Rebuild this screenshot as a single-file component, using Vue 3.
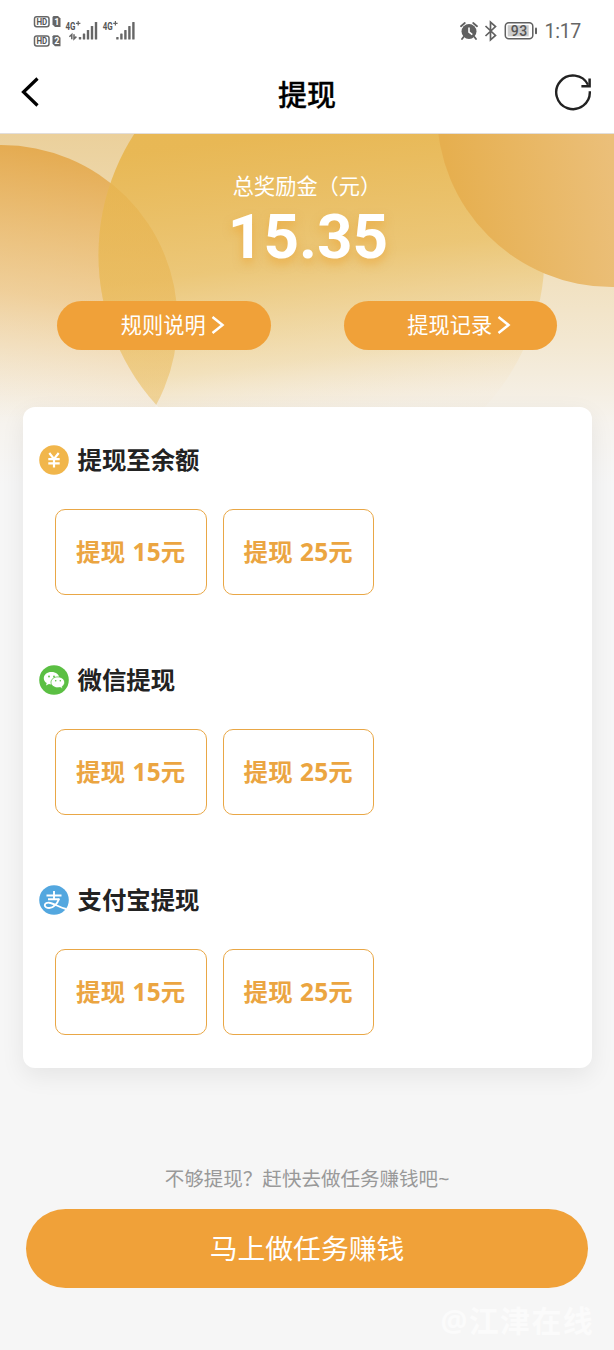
<script setup>
const groups = [
  { id: 'balance', title: '提现至余额' },
  { id: 'wechat', title: '微信提现' },
  { id: 'alipay', title: '支付宝提现' },
]
const amounts = [15, 25]
const links = ['规则说明', '提现记录']
const bars = [2.5, 6, 9.5, 13.5, 17.5]
</script>

<template>
  <div class="page">
    <header class="status">
      <svg class="signal" width="106" height="36" viewBox="0 0 106 36">
        <g fill="none" stroke="#666" stroke-width="1.5">
          <rect x="2.500" y="2.700" width="14.500" height="10" rx="2.200" />
          <rect x="2.500" y="21.900" width="14.500" height="10" rx="2.200" />
        </g>
        <g fill="#666">
          <path d="M21.500 2H26L28.500 4.500V13H23L20.500 10.500V3z" />
          <path d="M21.500 21.200H26L28.500 23.700V32.200H23L20.500 29.700V22.200z" />
        </g>
        <g class="tiny">
          <text x="4.400" y="10.900" textLength="10.800" lengthAdjust="spacingAndGlyphs">HD</text>
          <text x="4.400" y="30.100" textLength="10.800" lengthAdjust="spacingAndGlyphs">HD</text>
          <text class="slot" x="22.200" y="10.600">1</text>
          <text class="slot" x="22.200" y="29.800">2</text>
          <text class="net" x="33.500" y="16" textLength="10" lengthAdjust="spacingAndGlyphs">4G</text>
          <text class="net" x="70.800" y="16" textLength="10" lengthAdjust="spacingAndGlyphs">4G</text>
        </g>
        <path d="M44 9.300h4.400M46.200 7.100v4.400M81.200 9.300h4.400M83.400 7.100v4.400" stroke="#666" stroke-width="1.200" />
        <path d="M39.800 25.200V20.500l-2.400 2.300M42 20.200v4.700l2.400-2.300" fill="none" stroke="#666" stroke-width="1.500" />
        <g fill="#666">
          <rect v-for="(h, i) in bars" :key="'a' + i" :x="46.800 + i * 4" :y="25.500 - h" width="2.400" :height="h" rx=".6" />
          <rect v-for="(h, i) in bars" :key="'b' + i" :x="84.200 + i * 4" :y="25.500 - h" width="2.400" :height="h" rx=".6" />
        </g>
      </svg>
      <div class="status-right">
        <svg width="78" height="22" viewBox="0 0 78 22">
          <circle cx="9" cy="11.500" r="7.500" fill="#606060" />
          <path d="M9 7.500V12l3.300 2.600" fill="none" stroke="#fff" stroke-width="1.600" />
          <path d="M1 6.200L4.800 3M13.200 3L17 6.200M3.500 17l-1.500 2M14.500 17l1.500 2" stroke="#606060" stroke-width="1.800" stroke-linecap="round" />
          <path d="M25.500 6l10 9.500-5 4.300V2.200l5 4.300-10 9.500" fill="none" stroke="#606060" stroke-width="1.700" />
          <rect x="45.300" y="2.800" width="27.500" height="16" rx="3.500" fill="none" stroke="#606060" stroke-width="1.500" />
          <rect x="47.700" y="5.200" width="21" height="11.200" fill="#ccc" />
          <rect x="75" y="7.500" width="2" height="6.800" rx="1" fill="#606060" />
          <text class="battery" x="50.700" y="16" textLength="16.500">93</text>
        </svg>
        <span class="time">1:17</span>
      </div>
    </header>

    <nav class="nav">
      <svg width="40" height="40" viewBox="0 0 40 40" fill="none" stroke="#000" stroke-width="3.200">
        <path d="M26.500 6.500L12.500 20 26.500 33.500" />
      </svg>
      <h1>提现</h1>
      <svg width="40" height="40" viewBox="0 0 40 40" fill="none" stroke="#222" stroke-width="2.400">
        <path d="M36.800 19.300A16.800 16.800 0 1 1 35 12.700" />
        <path d="M36.600 6.500v7.800h-8.200" stroke-width="2.500" />
      </svg>
    </nav>

    <main class="content">
      <svg class="waves" width="614" height="370" viewBox="0 134 614 370">
        <defs>
          <linearGradient id="center" gradientUnits="userSpaceOnUse" x1="290" y1="134" x2="325" y2="415">
            <stop offset="0" stop-color="#e8b752" stop-opacity=".96" />
            <stop offset=".45" stop-color="#eabf62" stop-opacity=".76" />
            <stop offset=".8" stop-color="#efcf88" stop-opacity=".38" />
            <stop offset="1" stop-color="#f6e5cc" stop-opacity=".1" />
          </linearGradient>
          <linearGradient id="left" gradientUnits="userSpaceOnUse" x1="60" y1="145" x2="20" y2="420">
            <stop offset="0" stop-color="#e3a443" stop-opacity=".88" />
            <stop offset=".55" stop-color="#edbd73" stop-opacity=".52" />
            <stop offset="1" stop-color="#f4dcba" stop-opacity="0" />
          </linearGradient>
          <linearGradient id="lens" gradientUnits="userSpaceOnUse" x1="0" y1="180" x2="0" y2="410">
            <stop offset="0" stop-color="#e7b24f" stop-opacity=".5" />
            <stop offset="1" stop-color="#ebc064" stop-opacity=".5" />
          </linearGradient>
          <linearGradient id="right" gradientUnits="userSpaceOnUse" x1="450" y1="190" x2="614" y2="170">
            <stop offset="0" stop-color="#e6af4f" />
            <stop offset="1" stop-color="#ebbf79" />
          </linearGradient>
          <clipPath id="centerClip"><circle cx="321.500" cy="255" r="223" /></clipPath>
        </defs>
        <circle cx="1.500" cy="321" r="176" fill="url(#left)" />
        <circle cx="321.500" cy="255" r="223" fill="url(#center)" />
        <circle cx="1.500" cy="321" r="176" fill="url(#lens)" clip-path="url(#centerClip)" />
        <circle cx="612" cy="112" r="175" fill="url(#right)" />
      </svg>

      <section class="summary">
        <p class="label">总奖励金（元）</p>
        <p class="total">15.35</p>
        <div class="links">
          <button v-for="text in links" :key="text" class="pill">
            {{ text }}
            <svg width="14" height="20" viewBox="0 0 14 20" fill="none" stroke="#fff" stroke-width="2.500">
              <path d="M1.500 2l10 8-10 8" />
            </svg>
          </button>
        </div>
      </section>

      <section class="card">
        <div v-for="group in groups" :key="group.id" class="group">
          <h2>
            <svg v-if="group.id === 'balance'" width="30" height="30" viewBox="0 0 30 30">
              <circle cx="15" cy="15" r="14.800" fill="#f1b64b" />
              <path d="M10.300 8l4.700 6 4.700-6M15 14v8.500M9.300 14.200h11.400M9.300 18.300h11.400" fill="none" stroke="#fff" stroke-width="2.200" />
            </svg>
            <svg v-else-if="group.id === 'wechat'" width="30" height="30" viewBox="0 0 30 30">
              <circle cx="15" cy="15" r="14.800" fill="#5bbf43" />
              <path d="M12.500 7c-4.500 0-7.700 2.700-7.700 6.200 0 2 1.100 3.700 2.900 4.900L7 20.500l2.900-1.500c.9.300 1.700.4 2.600.4 4.400 0 7.900-2.700 7.900-6.200S16.900 7 12.500 7z" fill="#fff" />
              <path d="M18.900 11.900c-4 0-6.900 2.400-6.900 5.400s2.900 5.500 6.900 5.500c.8 0 1.500-.1 2.200-.3l2.500 1.300-.5-2.100c1.500-1 2.500-2.600 2.500-4.400 0-3-2.900-5.400-6.700-5.400z" fill="#fff" stroke="#5bbf43" stroke-width=".8" />
              <g fill="#5bbf43">
                <circle cx="10" cy="11.500" r=".9" /><circle cx="15" cy="11.500" r=".9" />
                <circle cx="16.700" cy="15.800" r=".8" /><circle cx="21.300" cy="15.800" r=".8" />
              </g>
            </svg>
            <svg v-else width="30" height="30" viewBox="0 0 30 30">
              <circle cx="15" cy="15" r="14.800" fill="#53a7df" />
              <g fill="none" stroke="#fff" stroke-width="1.900">
                <path d="M7.500 10.500h15M15 6v8.300M9 14.300h11.500" />
                <path d="M20 13.800c-1.500 4.700-5.300 9.200-9.800 9.200-2.600 0-4.400-1-4.400-2.700 0-1.700 1.800-2.800 4.200-2.600 4.500.4 9 4.200 17 6.300" />
              </g>
            </svg>
            <span>{{ group.title }}</span>
          </h2>
          <div class="amounts">
            <button v-for="amount in amounts" :key="amount">提现 {{ amount }}元</button>
          </div>
        </div>
      </section>

      <p class="hint">不够提现？赶快去做任务赚钱吧~</p>
      <button class="cta">马上做任务赚钱</button>
      <footer class="mark">@江津在线</footer>
    </main>
  </div>
</template>

<style>
body {
  background: #f6f6f6;
}
</style>

<style scoped>
.page {
  width: 614px;
  height: 1350px;
  overflow: hidden;
  font-family: "Noto Sans", "Noto Sans CJK SC", sans-serif;
  background: #f6f6f6;
}
h1, h2, p {
  margin: 0;
}
button {
  border: 0;
  padding: 0;
  margin: 0;
  font-family: inherit;
}
svg {
  display: block;
  flex: none;
}
.status {
  box-sizing: border-box;
  display: flex;
  justify-content: space-between;
  height: 60px;
  padding: 14px 33px 0 32px;
  background: #fff;
}
.tiny {
  font: 700 9px Roboto, sans-serif;
  fill: #555;
}
.tiny .slot {
  fill: #fff;
}
.tiny .net {
  font-size: 10.500px;
}
.status-right {
  display: flex;
  gap: 7px;
  padding-top: 6px;
}
.battery {
  font: 500 14px Roboto, sans-serif;
  fill: #555;
}
.time {
  font-family: Roboto, sans-serif;
  font-size: 19.500px;
  line-height: 23px;
  letter-spacing: -.3px;
  color: #666;
}
.nav {
  box-sizing: border-box;
  display: flex;
  justify-content: space-between;
  align-items: center;
  height: 74px;
  padding: 0 21px 10px 11px;
  border-bottom: 1px solid #e2dedb;
  background: #fff;
}
.nav h1 {
  margin-left: 10px;
  padding-top: 2px;
  font-family: "Noto Sans CJK SC", sans-serif;
  font-size: 29px;
  line-height: 40px;
  font-weight: 500;
  color: #000;
  -webkit-text-stroke: .3px #000;
}
.content {
  position: relative;
  height: 1216px;
  background: linear-gradient(#ebd09b 0, #f0ddb7 110px, #f3e8d2 210px, #f6f3ee 290px, #f6f6f6 350px);
}
.waves {
  position: absolute;
  top: 0;
  left: 0;
}
.summary {
  position: relative;
  height: 273px;
  text-align: center;
  color: #fff;
}
.label {
  padding-top: 36px;
  font-size: 21.200px;
  line-height: 32px;
}
.total {
  height: 70px;
  font-family: Roboto, sans-serif;
  font-size: 62px;
  line-height: 70px;
  font-weight: 700;
  text-indent: 2px;
  text-shadow: 0 5px 10px rgba(235, 155, 35, .5);
}
.links {
  display: flex;
  justify-content: space-between;
  padding: 28.500px 57px 0;
}
.pill {
  display: flex;
  align-items: center;
  justify-content: center;
  gap: 5px;
  box-sizing: border-box;
  width: 213.500px;
  height: 49px;
  padding: 0 0 1px 18px;
  border-radius: 25px;
  background: #f0a139;
  color: #fff;
  font-size: 21.200px;
  line-height: 32px;
}
.card {
  position: relative;
  box-sizing: border-box;
  width: 569px;
  height: 661px;
  margin-left: 23px;
  padding: 32px 16px 0;
  border-radius: 12px;
  background: #fff;
  box-shadow: 0 8px 24px rgba(0, 0, 0, .07);
}
.group {
  height: 220px;
}
.group h2 {
  display: flex;
  align-items: center;
  gap: 8.500px;
  height: 41px;
  font-size: 24.400px;
  font-weight: 700;
  color: #222;
}
.group h2 span {
  padding-bottom: 2px;
}
.amounts {
  display: flex;
  gap: 16px;
  padding: 29px 0 0 16px;
}
.amounts button {
  box-sizing: border-box;
  width: 151.500px;
  height: 86px;
  padding-bottom: 4px;
  border: 1.500px solid #e9a746;
  border-radius: 10px;
  background: #fff;
  color: #eba541;
  font-size: 24.400px;
  font-weight: 700;
  word-spacing: .7px;
  letter-spacing: .2px;
}
.hint {
  padding-top: 96px;
  text-align: center;
  font-size: 19.550px;
  line-height: 30px;
  color: #999;
}
.cta {
  display: block;
  width: 562px;
  height: 79px;
  margin: 15px 0 0 26px;
  padding-bottom: 4px;
  border-radius: 40px;
  background: #f0a139;
  color: #fff;
  font-size: 27.800px;
}
.mark {
  padding: 11px 20px 0 0;
  text-align: right;
  font-size: 30px;
  line-height: 44px;
  font-weight: 700;
  letter-spacing: 1.300px;
  color: #fbfbfb;
}
</style>
